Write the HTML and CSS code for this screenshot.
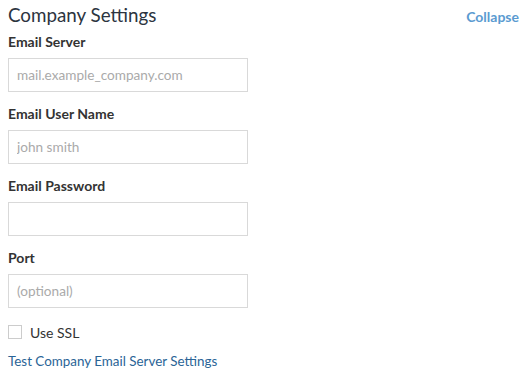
FILE: index.html
```html
<!DOCTYPE html>
<html>
<head>
<meta charset="utf-8">
<link rel="stylesheet" href="styles.css">
</head>
<body>
<div class="panel">
  <div class="header">
    <h2 class="title">Company Settings</h2>
    <a class="collapse" href="#">Collapse</a>
  </div>
  <div class="field">
    <label class="label">Email Server</label>
    <input class="input" type="text" placeholder="mail.example_company.com">
  </div>
  <div class="field">
    <label class="label">Email User Name</label>
    <input class="input" type="text" placeholder="john smith">
  </div>
  <div class="field">
    <label class="label">Email Password</label>
    <input class="input" type="password">
  </div>
  <div class="field">
    <label class="label">Port</label>
    <input class="input" type="text" placeholder="(optional)">
  </div>
  <label class="check"><span class="box"></span>Use SSL</label>
  <a class="test" href="#">Test Company Email Server Settings</a>
</div>
</body>
</html>
```
FILE: styles.css
```css
html, body {
  margin: 0;
  padding: 0;
  background: #fff;
}
.panel {
  padding: 0 10px 0 8px;
  font-family: Lato, "Open Sans", sans-serif;
  color: #333;
}
.header {
  display: flex;
  justify-content: space-between;
  align-items: center;
  height: 32px;
}
.title {
  margin: 0 0 2px 0;
  font-size: 18.8px;
  font-weight: 400;
  color: #2c3440;
  line-height: 26px;
}
.collapse {
  font-size: 14px;
  font-weight: 700;
  color: #5b9bd1;
  text-decoration: none;
}
.field {
  display: flex;
  flex-direction: column;
  gap: 6px;
  margin-bottom: 12px;
}
.label {
  font-size: 14px;
  font-weight: 700;
  color: #333;
  line-height: 20px;
}
.input {
  box-sizing: border-box;
  width: 240px;
  height: 34px;
  margin: 0;
  border: 1px solid #d9d9d9;
  border-radius: 0;
  padding: 0 8px;
  font-family: inherit;
  font-size: 13.6px;
  color: #333;
}
.input::placeholder {
  color: #aaa;
}
.check {
  display: flex;
  align-items: center;
  gap: 8px;
  font-size: 14px;
  color: #333;
  margin-top: 14px;
  height: 20px;
}
.box {
  box-sizing: border-box;
  width: 14px;
  height: 14px;
  border: 1px solid #ccc;
}
.test {
  display: block;
  margin-top: 9px;
  font-size: 13.4px;
  line-height: 20px;
  color: #2a6496;
  text-decoration: none;
}
```
